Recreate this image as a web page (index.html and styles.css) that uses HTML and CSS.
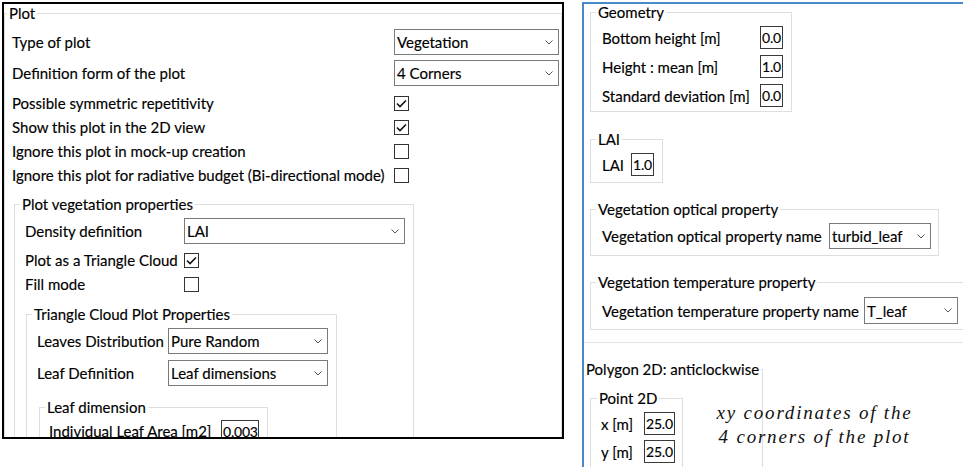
FILE: index.html
```html
<!DOCTYPE html>
<html>
<head>
<meta charset="utf-8">
<link rel="stylesheet" href="styles.css">
</head>
<body>
<div class="left">
  <fieldset class="fs fs-plot">
    <legend class="lg-plot">Plot</legend>
    <div class="plot-body">
      <div class="row h26"><span class="lbl w382">Type of plot</span><div class="select w165"><span>Vegetation</span><svg class="chev" width="8" height="5" viewBox="0 0 8 5"><polyline points="0.5,0.5 4,4 7.5,0.5"/></svg></div></div>
      <div class="row h26 mt5"><span class="lbl w382">Definition form of the plot</span><div class="select w165"><span>4 Corners</span><svg class="chev" width="8" height="5" viewBox="0 0 8 5"><polyline points="0.5,0.5 4,4 7.5,0.5"/></svg></div></div>
      <div class="row h24 mt5"><span class="lbl w382">Possible symmetric repetitivity</span><div class="check"><svg width="13" height="13" viewBox="0 0 13 13"><polyline points="2,6.5 5,9.5 11,3.5"/></svg></div></div>
      <div class="row h24"><span class="lbl w382">Show this plot in the 2D view</span><div class="check"><svg width="13" height="13" viewBox="0 0 13 13"><polyline points="2,6.5 5,9.5 11,3.5"/></svg></div></div>
      <div class="row h24"><span class="lbl w382">Ignore this plot in mock-up creation</span><div class="check"></div></div>
      <div class="row h24"><span class="lbl w382">Ignore this plot for radiative budget (Bi-directional mode)</span><div class="check"></div></div>

      <fieldset class="fs fs-veg">
        <legend>Plot vegetation properties</legend>
        <div class="veg-body">
          <div class="row h26"><span class="lbl w159">Density definition</span><div class="select w221"><span>LAI</span><svg class="chev" width="8" height="5" viewBox="0 0 8 5"><polyline points="0.5,0.5 4,4 7.5,0.5"/></svg></div></div>
          <div class="row h24 mt4"><span class="lbl w159">Plot as a Triangle Cloud</span><div class="check"><svg width="13" height="13" viewBox="0 0 13 13"><polyline points="2,6.5 5,9.5 11,3.5"/></svg></div></div>
          <div class="row h24"><span class="lbl w159">Fill mode</span><div class="check"></div></div>

          <fieldset class="fs fs-tri">
            <legend>Triangle Cloud Plot Properties</legend>
            <div class="tri-body">
              <div class="row h26"><span class="lbl w131">Leaves Distribution</span><div class="select w160"><span>Pure Random</span><svg class="chev" width="8" height="5" viewBox="0 0 8 5"><polyline points="0.5,0.5 4,4 7.5,0.5"/></svg></div></div>
              <div class="row h26 mt6"><span class="lbl w131">Leaf Definition</span><div class="select w160"><span>Leaf dimensions</span><svg class="chev" width="8" height="5" viewBox="0 0 8 5"><polyline points="0.5,0.5 4,4 7.5,0.5"/></svg></div></div>

              <fieldset class="fs fs-leaf">
                <legend>Leaf dimension</legend>
                <div class="leaf-body">
                  <div class="row"><span class="lbl w172">Individual Leaf Area [m2]</span><div class="inp w37 h22">0.003</div></div>
                </div>
              </fieldset>
            </div>
          </fieldset>
        </div>
      </fieldset>
    </div>
  </fieldset>
</div>

<div class="right">
  <fieldset class="fs fs-geo">
    <legend>Geometry</legend>
    <div class="geo-body">
      <div class="row"><span class="lbl w158">Bottom height [m]</span><div class="inp w22 h23">0.0</div></div>
      <div class="row mt6"><span class="lbl w158">Height : mean [m]</span><div class="inp w22 h23">1.0</div></div>
      <div class="row mt6"><span class="lbl w158">Standard deviation [m]</span><div class="inp w22 h23">0.0</div></div>
    </div>
  </fieldset>

  <fieldset class="fs fs-lai">
    <legend>LAI</legend>
    <div class="lai-body">
      <div class="row"><span class="lbl w29">LAI</span><div class="inp w22 h23">1.0</div></div>
    </div>
  </fieldset>

  <fieldset class="fs fs-opt">
    <legend>Vegetation optical property</legend>
    <div class="opt-body">
      <div class="row"><span class="lbl w227">Vegetation optical property name</span><div class="select w102"><span>turbid_leaf</span><svg class="chev" width="8" height="5" viewBox="0 0 8 5"><polyline points="0.5,0.5 4,4 7.5,0.5"/></svg></div></div>
    </div>
  </fieldset>

  <fieldset class="fs fs-temp">
    <legend>Vegetation temperature property</legend>
    <div class="temp-body">
      <div class="row"><span class="lbl w262">Vegetation temperature property name</span><div class="select w94 h27"><span>T_leaf</span><svg class="chev" width="8" height="5" viewBox="0 0 8 5"><polyline points="0.5,0.5 4,4 7.5,0.5"/></svg></div></div>
    </div>
  </fieldset>

  <div class="sep">
    <fieldset class="fs fs-poly">
      <legend>Polygon 2D: anticlockwise</legend>
      <div class="poly-body">
        <fieldset class="fs fs-pt">
          <legend>Point 2D</legend>
          <div class="pt-body">
            <div class="row"><span class="lbl w43">x [m]</span><div class="inp w31 h23">25.0</div></div>
            <div class="row mt5"><span class="lbl w43">y [m]</span><div class="inp w31 h23">25.0</div></div>
          </div>
        </fieldset>
      </div>
    </fieldset>
  </div>

  <div class="note">xy coordinates of the<br>4 corners of the plot</div>
</div>
</body>
</html>
```

FILE: styles.css
```css
html, body {
  margin: 0;
}
body {
  width: 963px;
  height: 467px;
  overflow: hidden;
  background: #fff;
  font-family: Lato, "Liberation Sans", sans-serif;
  font-size: 15px;
  color: #000;
  display: flex;
  align-items: flex-start;
  padding: 2px 0 0 2px;
  box-sizing: border-box;
  -webkit-text-stroke: 0.15px #000;
}

.left {
  flex: none;
  width: 562px;
  height: 437px;
  border: 2px solid #000;
  box-sizing: border-box;
  overflow: hidden;
}

.right {
  flex: 1;
  min-width: 0;
  height: 480px;
  margin-left: 18px;
  border-left: 2px solid #4a88cc;
  border-top: 2px solid #4a88cc;
  overflow: hidden;
  position: relative;
}

/* group boxes */
.fs {
  margin: 0;
  padding: 0;
  border: 1px solid #dedede;
  min-width: 0;
  box-sizing: border-box;
}
.fs > legend {
  padding: 0 2px;
  margin-left: 5px;
  line-height: 18px;
  height: 18px;
}

.fs-plot { width: 558px; }
.fs-plot > legend.lg-plot { margin-left: 2px; }
.plot-body { padding: 7px 0 0 7px; }

.fs-veg { width: 400px; margin: 8px 0 0 2px; }
.veg-body { padding: 5px 0 30px 10px; }

.fs-tri { width: 311px; margin: 9px 0 0 1px; }
.tri-body { padding: 5px 0 30px 10px; }

.fs-leaf { width: 229px; margin: 12px 0 0 2px; }
.leaf-body { padding: 4px 0 30px 9px; }

.fs-geo { width: 202px; margin: -1px 0 0 6px; }
.geo-body { padding: 5px 0 4px 11px; }

.fs-lai { width: 73px; margin: 18px 0 0 6px; }
.lai-body { padding: 5px 0 6px 11px; }

.fs-opt { width: 349px; margin: 17px 0 0 6px; }
.opt-body { padding: 5px 0 6px 11px; }

.fs-temp { width: 390px; margin: 17px 0 0 6px; }
.temp-body { padding: 6px 0 5px 11px; }

.sep {
  margin-top: 12px;
  border-top: 1px solid #e4e4e4;
  padding-top: 17px;
}
.fs-poly { width: 179px; border-left: none; }
.fs-poly > legend { margin-left: 0; }
.poly-body { padding: 11px 0 20px 6px; }

.fs-pt { width: 93px; }
.fs-pt > legend { margin-left: 6px; }
.pt-body { padding: 5px 0 20px 10px; }

/* rows */
.row {
  display: flex;
  align-items: center;
}
.lbl {
  flex: none;
  white-space: nowrap;
  line-height: 18px;
}
.h24 { height: 24px; }
.h26 { height: 26px; }
.mt4 { margin-top: 4px; }
.mt5 { margin-top: 5px; }
.mt6 { margin-top: 6px; }

.w29 { width: 29px; }
.w43 { width: 43px; }
.w131 { width: 131px; }
.w158 { width: 158px; }
.w159 { width: 159px; }
.w172 { width: 172px; }
.w227 { width: 227px; }
.w262 { width: 262px; }
.w382 { width: 382px; }

/* select boxes */
.select {
  flex: none;
  height: 26px;
  box-sizing: border-box;
  border: 1px solid #7a7a7a;
  background: #fff;
  display: flex;
  align-items: center;
  justify-content: space-between;
  padding: 0 5px 0 2px;
  white-space: nowrap;
}
.select.h27 { height: 27px; }
.w94 { width: 94px; }
.w102 { width: 102px; }
.w160 { width: 160px; }
.w165 { width: 165px; }
.w221 { width: 221px; }
.chev {
  flex: none;
  fill: none;
  stroke: #555;
  stroke-width: 1;
}

/* checkboxes */
.check {
  flex: none;
  width: 15px;
  height: 15px;
  box-sizing: border-box;
  border: 1px solid #333;
  background: #fff;
  display: flex;
}
.check svg {
  fill: none;
  stroke: #111;
  stroke-width: 1.6;
}

/* text inputs */
.inp {
  flex: none;
  box-sizing: border-box;
  border: 1px solid #3a3a3a;
  display: flex;
  align-items: center;
  padding: 0 1px;
  white-space: nowrap;
  overflow: hidden;
  font-size: 14px;
  letter-spacing: -0.2px;
}
.w22 { width: 23px; }
.w31 { width: 31px; }
.w37 { width: 38px; }
.h22 { height: 22px; }
.h23 { height: 23px; }

/* annotation */
.note {
  position: absolute;
  left: 100px;
  top: 397px;
  width: 261px;
  text-align: center;
  font-family: "Liberation Serif", "Times New Roman", serif;
  font-style: italic;
  font-size: 19px;
  letter-spacing: 1.8px;
  line-height: 24px;
  color: #111;
  -webkit-text-stroke: 0;
}
```
